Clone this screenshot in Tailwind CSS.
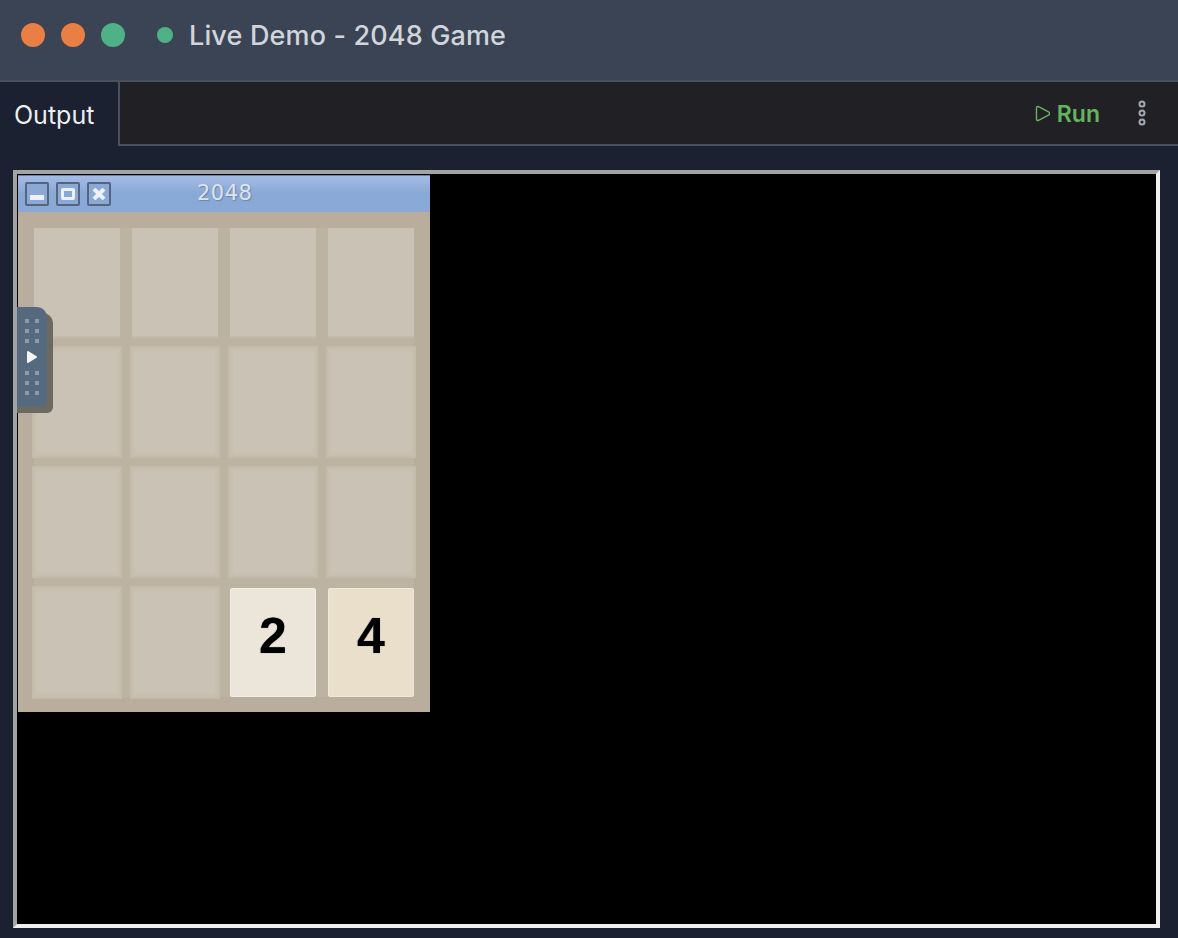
<!DOCTYPE html>
<html lang="en">
  <head>
    <meta charset="UTF-8" />
    <meta name="viewport" content="width=device-width, initial-scale=1.0" />
    <title>Live Demo - 2048 Game</title>
    <script src="https://cdn.jsdelivr.net/npm/@tailwindcss/browser@4"></script>
  </head>
  <body class="h-screen overflow-hidden bg-[#1b2130] font-['Inter',sans-serif]">
    <!-- Header -->
    <header class="h-[82px] flex items-center pb-[11px] pl-[21px] bg-[#3b4454] border-b-2 border-[#4a505c]">
      <div class="flex gap-4">
        <span class="w-6 h-6 rounded-full bg-[#e97f45]"></span>
        <span class="w-6 h-6 rounded-full bg-[#e97f45]"></span>
        <span class="w-6 h-6 rounded-full bg-[#4fb286]"></span>
      </div>
      <span class="w-4 h-4 ml-8 rounded-full bg-[#4fb286]"></span>
      <h1 class="ml-4 mt-[2px] text-[27px] leading-none font-medium tracking-[0.15px] text-[#d1d5db]">Live Demo - 2048 Game</h1>
    </header>

    <!-- Tabs -->
    <div class="h-[64px] flex">
      <div class="w-[120px] pl-[14px] pt-[3px] flex items-center border-r-2 border-[#4a505c] text-[25px] text-[#eeeeee]">Output</div>
      <div class="flex-1 flex items-center justify-end pr-[32px] bg-[#212125] border-b-2 border-[#4a505c]">
        <svg class="w-[16px] h-[17px] mr-[6px]" viewBox="0 0 16 17" fill="none" stroke="#66b35f" stroke-width="1.4" stroke-linejoin="round">
          <path d="M1.5 3 Q1.5 1 3.5 1.6 L13.5 6.8 Q15.5 8.5 13.5 10.2 L3.5 15.4 Q1.5 16 1.5 14 Z" />
        </svg>
        <span class="mt-[2px] text-[23px] leading-none font-semibold text-[#66b35f]">Run</span>
        <svg class="w-2 h-[26px] ml-[38px]" viewBox="0 0 8 26" fill="none" stroke="#a3a9b3" stroke-width="2">
          <circle cx="4" cy="4" r="2.5" />
          <circle cx="4" cy="13" r="2.5" />
          <circle cx="4" cy="22" r="2.5" />
        </svg>
      </div>
    </div>

    <!-- Canvas -->
    <div class="relative ml-[13px] mt-[24px] w-[1147px] h-[758px] bg-black border-[4px] border-t-[#a3a3a3] border-l-[#a3a3a3] border-r-[#f0f0f0] border-b-[#f0f0f0]">
      <div class="ml-px mt-px w-[412px] h-[537px] bg-[#b9ad9d]">
        <!-- Window title bar -->
        <div class="relative h-[37px] flex items-center gap-[7px] pl-[7px] bg-gradient-to-b from-[#a3bce5] via-[#88a8d6] to-[#8aa9d6] border-t border-[#6f7f98]">
          <div class="w-6 h-6 flex items-center justify-center rounded-[2px] border-2 border-[#56657d] bg-[#8aa9d6]">
            <span class="mt-[7px] w-[14px] h-[5px] bg-[#eef2f8]"></span>
          </div>
          <div class="w-6 h-6 flex items-center justify-center rounded-[2px] border-2 border-[#56657d] bg-[#8aa9d6]">
            <span class="w-[14px] h-3 rounded-[2px] border-[3px] border-[#eef2f8]"></span>
          </div>
          <div class="w-6 h-6 flex items-center justify-center rounded-[2px] border-2 border-[#56657d] bg-[#8aa9d6]">
            <svg class="w-[14px] h-3" viewBox="0 0 14 12" stroke="#eef2f8" stroke-width="4">
              <path d="M2 1 L12 11 M12 1 L2 11" />
            </svg>
          </div>
          <span class="absolute left-[179px] top-[4px] text-[21px] leading-[26px] tracking-[0.5px] font-['DejaVu_Sans',sans-serif] text-[#dde3ee] [text-shadow:1px_1px_1px_#6f84a6]">2048</span>
        </div>

        <!-- Board -->
        <div class="mt-[16px] ml-[16px] w-[380px] grid grid-cols-[repeat(4,86px)] grid-rows-[108px_108px_108px_109px] gap-3 bg-[#bdb3a2]">
          <div class="bg-[#cbc2b6] shadow-[0_2px_0_#c4bbab]"></div>
          <div class="bg-[#cbc2b6] shadow-[0_2px_0_#c4bbab]"></div>
          <div class="bg-[#cbc2b6] shadow-[0_2px_0_#c4bbab]"></div>
          <div class="bg-[#cbc2b6] shadow-[0_2px_0_#c4bbab]"></div>
          <div class="bg-[#cbc2b6] shadow-[0_0_0_2px_#c4bbab,inset_0_0_0_3px_#c8bfb0]"></div>
          <div class="bg-[#cbc2b6] shadow-[0_0_0_2px_#c4bbab,inset_0_0_0_3px_#c8bfb0]"></div>
          <div class="bg-[#cbc2b6] shadow-[0_0_0_2px_#c4bbab,inset_0_0_0_3px_#c8bfb0]"></div>
          <div class="bg-[#cbc2b6] shadow-[0_0_0_2px_#c4bbab,inset_0_0_0_3px_#c8bfb0]"></div>
          <div class="bg-[#cbc2b6] shadow-[0_0_0_2px_#c4bbab,inset_0_0_0_3px_#c8bfb0]"></div>
          <div class="bg-[#cbc2b6] shadow-[0_0_0_2px_#c4bbab,inset_0_0_0_3px_#c8bfb0]"></div>
          <div class="bg-[#cbc2b6] shadow-[0_0_0_2px_#c4bbab,inset_0_0_0_3px_#c8bfb0]"></div>
          <div class="bg-[#cbc2b6] shadow-[0_0_0_2px_#c4bbab,inset_0_0_0_3px_#c8bfb0]"></div>
          <div class="bg-[#cbc2b6] shadow-[0_0_0_2px_#c4bbab,inset_0_0_0_3px_#c8bfb0]"></div>
          <div class="bg-[#cbc2b6] shadow-[0_0_0_2px_#c4bbab,inset_0_0_0_3px_#c8bfb0]"></div>
          <div class="flex items-start justify-center pt-[22px] rounded-[2px] bg-[#ece5d9] border border-[#f3eee4] text-[50px] leading-[50px] font-bold text-black font-['Liberation_Sans',sans-serif] [text-shadow:0_0_1px_#555]">2</div>
          <div class="flex items-start justify-center pt-[22px] rounded-[2px] bg-[#e9dfca] border border-[#f1e9d8] text-[50px] leading-[50px] font-bold text-black font-['Liberation_Sans',sans-serif] [text-shadow:0_0_1px_#555]">4</div>
        </div>
      </div>

      <!-- Floating control handle -->
      <div class="absolute left-0 top-[133px] w-[30px] h-[100px] flex flex-col items-center justify-center rounded-br-[6px] rounded-tr-[10px] bg-[#55697f] shadow-[6px_6px_0_#6c6a60,0_6px_0_#6c6a60]">
        <div class="grid grid-cols-2 gap-[6px]">
          <span class="w-1 h-1 bg-[#8f99a5]"></span><span class="w-1 h-1 bg-[#8f99a5]"></span>
          <span class="w-1 h-1 bg-[#8f99a5]"></span><span class="w-1 h-1 bg-[#8f99a5]"></span>
          <span class="w-1 h-1 bg-[#8f99a5]"></span><span class="w-1 h-1 bg-[#8f99a5]"></span>
        </div>
        <svg class="w-[10px] h-3 my-2" viewBox="0 0 10 12" fill="#f5f5f5" stroke="#f5f5f5" stroke-width="2" stroke-linejoin="round">
          <path d="M1 1 L9 6 L1 11 Z" />
        </svg>
        <div class="grid grid-cols-2 gap-[6px]">
          <span class="w-1 h-1 bg-[#8f99a5]"></span><span class="w-1 h-1 bg-[#8f99a5]"></span>
          <span class="w-1 h-1 bg-[#8f99a5]"></span><span class="w-1 h-1 bg-[#8f99a5]"></span>
          <span class="w-1 h-1 bg-[#8f99a5]"></span><span class="w-1 h-1 bg-[#8f99a5]"></span>
        </div>
      </div>
    </div>
  </body>
</html>
